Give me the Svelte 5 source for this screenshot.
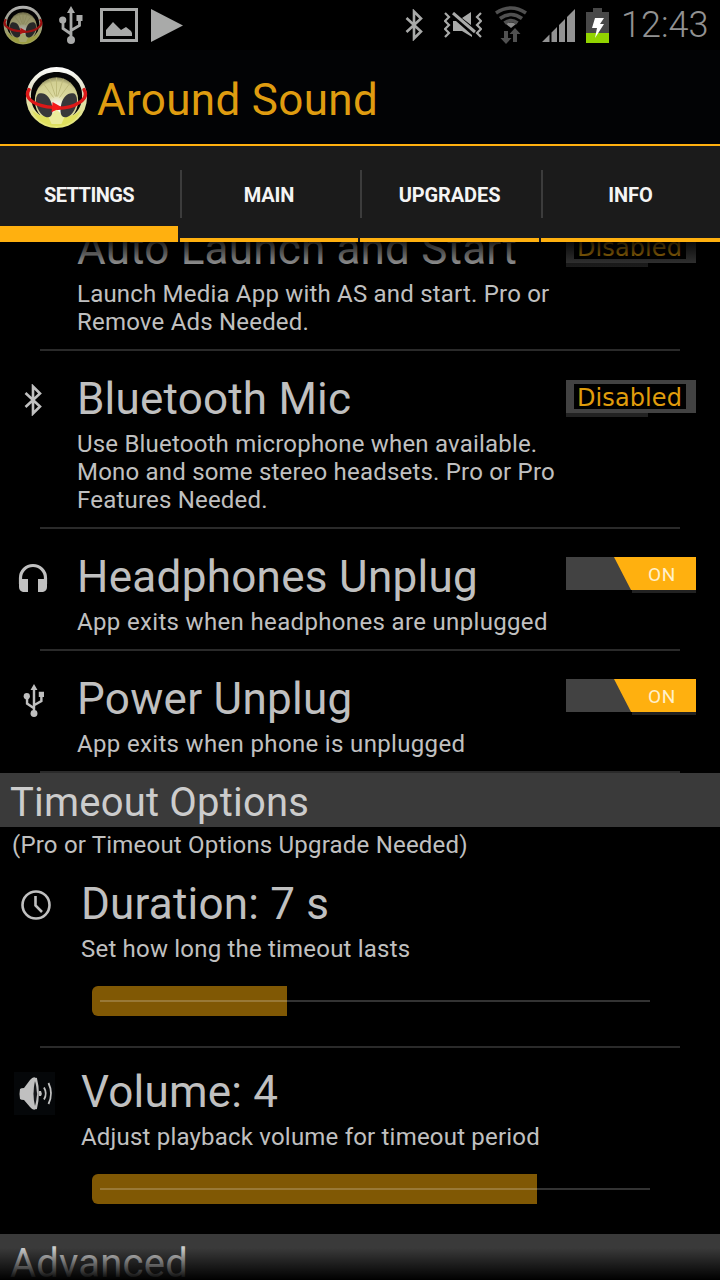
<script>
    let active = "SETTINGS";

    const tabs = ["SETTINGS", "MAIN", "UPGRADES", "INFO"];

    const options = [
        {
            title: "Auto Launch and Start",
            text: "Launch Media App with AS and start. Pro or\nRemove Ads Needed.",
            on: false,
        },
        {
            title: "Bluetooth Mic",
            icon: "bluetooth",
            text: "Use Bluetooth microphone when available.\nMono and some stereo headsets. Pro or Pro\nFeatures Needed.",
            on: false,
        },
        {
            title: "Headphones Unplug",
            icon: "headphones",
            text: "App exits when headphones are unplugged",
            on: true,
        },
        {
            title: "Power Unplug",
            icon: "usb",
            text: "App exits when phone is unplugged",
            on: true,
        },
    ];

    const sliders = [
        {
            title: "Duration: 7 s",
            icon: "clock",
            text: "Set how long the timeout lasts",
            width: 195,
        },
        {
            title: "Volume: 4",
            icon: "volume",
            text: "Adjust playback volume for timeout period",
            width: 445,
        },
    ];
</script>

<svelte:head><title>Around Sound</title></svelte:head>

{#snippet logo(size)}
    <svg class="logo" width={size} height={size} viewBox="0 0 64 64">
        <defs>
            <linearGradient id="ring{size}" x1="0" y1="0" x2="0" y2="1">
                <stop offset="0" stop-color="#ffffff" />
                <stop offset="0.4" stop-color="#dcdcc0" />
                <stop offset="1" stop-color="#e6e874" />
            </linearGradient>
            <radialGradient id="shell{size}" cx="0.5" cy="0.7" r="0.7">
                <stop offset="0" stop-color="#ffffff" />
                <stop offset="0.2" stop-color="#f4f4ea" />
                <stop offset="0.45" stop-color="#dcdaa0" />
                <stop offset="0.85" stop-color="#d2cf92" />
                <stop offset="1" stop-color="#8a875c" />
            </radialGradient>
        </defs>
        <circle cx="32" cy="32" r="31" fill="url(#ring{size})" />
        <path d="M6 30C6 15 18 6 32 6s26 9 26 24c0 10-4 16-9 20H15C10 46 6 40 6 30z" fill="#050505" />
        <ellipse cx="32" cy="35" rx="22" ry="23.500" fill="url(#shell{size})" />
        <path d="M29 32L18 17M31 31L25 13M32 31V12M33 31L39 13M35 32L46 17" stroke="#bfbb7c" stroke-width="1" fill="none" />
        <path d="M7 45c5 4 9 7 25 7s20-3 25-7c-4 10-13 16-25 16S11 55 7 45z" fill="#dfe05f" />
        <path d="M24 52l8-8 8 8-3 7H27z" fill="#ecec9c" />
        <path d="M14 28c6-2 11 3 13 10 2 8 1 15-5 14C14 51 7 33 14 28z" fill="#38383a" />
        <path d="M50 28c-6-2-11 3-13 10-2 8-1 15 5 14C50 51 57 33 50 28z" fill="#38383a" />
        <path d="M4 24C-2 34 12 41 29 42M60 24c6 10-10 19-27 19" fill="none" stroke="#dd1818" stroke-width="3.400" stroke-linecap="round" />
        <path d="M28 36.500l9.500 5.500-10.500 5z" fill="#f51a1a" />
    </svg>
{/snippet}

{#snippet usb(w, h)}
    <svg width={w} height={h} viewBox="0 0 24 38">
        <path d="M12 5v28M12 28L4 22.500V15M12 24.500l8.500-5V12" fill="none" stroke="currentColor" stroke-width="2.800" />
        <path d="M12 0l4 7H8zM17.500 9h6v6h-6z" fill="currentColor" />
        <circle cx="3.700" cy="14" r="3.600" fill="currentColor" />
        <circle cx="12" cy="34" r="4" fill="currentColor" />
    </svg>
{/snippet}

{#snippet bluetooth(w, h)}
    <svg width={w} height={h} viewBox="0 0 18 32">
        <path d="M1.500 9L16 22.500 9 29.500V2.500L16 9.500 1.500 23" fill="none" stroke="currentColor" stroke-width="2.600" />
    </svg>
{/snippet}

{#snippet icon(name)}
    {#if name === "bluetooth"}
        {@render bluetooth(18, 32)}
    {:else if name === "usb"}
        {@render usb(22, 33)}
    {:else if name === "headphones"}
        <svg width="30" height="30" viewBox="0 0 30 30">
            <path d="M2.500 21v-6a12.500 12.500 0 0 1 25 0v6" fill="none" stroke="currentColor" stroke-width="3.200" />
            <path d="M1 16h9v13H5q-4-1-4-5zM29 16h-9v13h5q4-1 4-5z" fill="currentColor" />
        </svg>
    {:else if name === "clock"}
        <svg width="32" height="32" viewBox="0 0 32 32">
            <circle cx="16" cy="16" r="13.500" fill="none" stroke="currentColor" stroke-width="2.600" />
            <path d="M15.500 7v9.500l6.500 6.500" fill="none" stroke="currentColor" stroke-width="2.600" />
        </svg>
    {:else if name === "volume"}
        <svg class="speaker" width="41" height="43" viewBox="0 0 41 43">
            <path d="M6 17q1-1 4-1l6-8q4-5 7-1v29q-3 4-7-1l-6-7q-3 0-4-1-1-5 0-10z" fill="currentColor" />
            <path d="M21 9q4 12.500 0 25-3-12.500 0-25z" fill="#15171a" />
            <path d="M22 6q4 15.500 0 31" fill="none" stroke="currentColor" stroke-width="1.800" />
            <path d="M25 19h2q1.500 2.500 0 5h-2z" fill="currentColor" />
            <path d="M30 15.500q3.500 6 0 12M34.500 11q5 10.500 0 21" fill="none" stroke="currentColor" stroke-width="1.800" />
        </svg>
    {/if}
{/snippet}

<div class="screen">
    <div class="status">
        <div class="left">
            {@render logo(40)}
            {@render usb(24, 38)}
            <svg width="38" height="34" viewBox="0 0 38 34">
                <path d="M1.500 1.500h35v31h-35z" fill="none" stroke="currentColor" stroke-width="3" />
                <path d="M6 28v-6l7-8 6 6 2 2 5-3 5 4 1 2v3z" fill="currentColor" />
            </svg>
            <svg class="play" width="32" height="33" viewBox="0 0 32 33">
                <path d="M0 0l32 16.500L0 33z" fill="currentColor" />
            </svg>
        </div>
        <div class="right">
            {@render bluetooth(18, 32)}
            <svg class="mute" width="38" height="26" viewBox="0 0 38 26">
                <path d="M1 1l4 4-4 4 4 4-4 4 4 4-4 4M37 1l-4 4 4 4-4 4 4 4-4 4 4 4" fill="none" stroke="currentColor" stroke-width="2.200" />
                <path d="M9 9v10h9l10 6v-2L12 9zM18 6l9-6v13z" fill="currentColor" />
                <path d="M9 1l22 19" stroke="currentColor" stroke-width="3" />
            </svg>
            <svg class="wifi" width="34" height="38" viewBox="0 0 34 38">
                <path d="M2 7q15-10 30 0M6 12.500q11-8 22 0M10.500 17q6.500-5 13 0" fill="none" stroke="#505050" stroke-width="3.600" />
                <path d="M12 18q5-3 10 0l-5 4z" fill="#8a8a8a" />
                <path d="M10 25h4v7h3.500L12 38l-5.500-6H10zM19 36v-8h-3.500l5.500-6 5.500 6H23v8z" fill="#505050" />
            </svg>
            <svg class="signal" width="33" height="33" viewBox="0 0 33 33">
                <path d="M0 33l7.500-7.500V33zM9.500 33V23.500l5.500-5.500v15zM17 33V16l6-6v23zM25 33V8l8-8v33z" fill="#939393" />
            </svg>
            <svg class="battery" width="23" height="35" viewBox="0 0 23 35">
                <path d="M7 0h9v4h7v31H0V4h7z" fill="#484848" />
                <path d="M0 25h23v10H0z" fill="#92d300" />
                <path d="M9 10h9l-4 6h4L9 30l2-10H6z" fill="#fff" />
            </svg>
            <span class="time">12:43</span>
        </div>
    </div>

    <header>
        {@render logo(63)}
        <h1>Around Sound</h1>
    </header>

    <nav>
        {#each tabs as tab}
            <button class:active={tab === active} on:click={() => (active = tab)}>{tab}</button>
        {/each}
    </nav>

    <main>
        <div class="list">
            {#each options as { title, text, icon: name, on }}
                <div class="row" class:on>
                    <div class="icon {name}">{@render icon(name)}</div>
                    <div class="body">
                        <h2>{title}</h2>
                        <p>{text}</p>
                    </div>
                    {#if on}
                        <div class="switch"><div class="thumb">ON</div></div>
                    {:else}
                        <div class="disabled"><span>Disabled</span></div>
                    {/if}
                </div>
                <hr />
            {/each}

            <h3>Timeout Options</h3>
            <p class="note">(Pro or Timeout Options Upgrade Needed)</p>

            {#each sliders as { title, text, icon: name, width }, i}
                {#if i > 0}<hr />{/if}
                <div class="row slide">
                    <div class="icon {name}">{@render icon(name)}</div>
                    <div class="body">
                        <h2>{title}</h2>
                        <p>{text}</p>
                        <div class="slider">
                            <div class="fill" style="width: {width}px"></div>
                            <div class="track"></div>
                        </div>
                    </div>
                </div>
            {/each}

            <h3>Advanced</h3>
        </div>
    </main>
</div>

<style>
    :global(body) {
        background: #000;
    }
    .screen {
        display: flex;
        flex-direction: column;
        width: 720px;
        height: 1280px;
        overflow: hidden;
        background: #000;
        color: #c0c0c0;
        font-family: Roboto, sans-serif;
    }
    svg {
        display: block;
        flex: none;
    }
    h1, h2, h3, p {
        margin: 0;
        font-weight: 400;
        white-space: pre;
    }

    .status {
        display: flex;
        justify-content: space-between;
        height: 50px;
        color: #a9aaa9;
    }
    .left, .right {
        display: flex;
        align-items: center;
    }
    .left {
        padding-left: 3px;
        gap: 17px;
    }
    .left .logo {
        opacity: 0.7;
        margin-right: -1px;
    }
    .play {
        margin-left: -4px;
    }
    .right {
        padding-right: 11px;
    }
    .mute {
        margin-left: 21px;
    }
    .wifi {
        margin-left: 12px;
    }
    .signal {
        margin-left: 14px;
    }
    .battery {
        margin-left: 11px;
    }
    .time {
        width: 88px;
        margin-left: 12px;
        color: #929292;
        font-size: 36px;
        font-weight: 300;
        line-height: 50px;
        white-space: nowrap;
    }

    header {
        display: flex;
        align-items: center;
        height: 94px;
        padding-left: 25px;
        gap: 9px;
        background: #020305;
        border-bottom: 2px solid #ffb00f;
    }
    h1 {
        color: #df9c10;
        font-size: 44px;
        letter-spacing: 0.33px;
        line-height: 52px;
        padding-top: 5px;
    }

    nav {
        display: grid;
        grid-template-columns: 178px 178px 179px 179px;
        column-gap: 2px;
        height: 96px;
        background: #1b1b1b;
    }
    nav button {
        position: relative;
        padding: 6px 0 0;
        border: 0;
        border-bottom: 4px solid #ffb00f;
        background: none;
        color: #f4f4f4;
        font: 700 20px Roboto, sans-serif;
        letter-spacing: -0.1px;
    }
    nav button.active {
        border-bottom-width: 16px;
        padding-top: 18px;
        letter-spacing: -0.55px;
    }
    nav button + button::before {
        content: "";
        position: absolute;
        left: 0;
        top: 24px;
        width: 2px;
        height: 48px;
        background: #3c3c3c;
    }

    main {
        position: relative;
        flex: 1;
        min-height: 0;
        overflow: hidden;
    }
    /* fading edges of the scroll area */
    main::before, main::after {
        content: "";
        position: absolute;
        z-index: 1;
        left: 0;
        right: 0;
        height: 32px;
    }
    main::before {
        top: 0;
        background: linear-gradient(rgba(0, 0, 0, 0.85), transparent);
    }
    main::after {
        bottom: 0;
        background: linear-gradient(transparent, #000);
    }
    .list {
        margin-top: -41px;
    }
    .row {
        display: grid;
        grid-template-columns: 77px 489px 130px;
        padding: 22px 0 13px;
    }
    .icon {
        display: flex;
        align-items: center;
        height: 54px;
        padding-left: 18px;
    }
    .icon.bluetooth {
        padding-left: 24px;
    }
    .icon.usb {
        padding-left: 23px;
    }
    h2 {
        font-size: 44px;
        letter-spacing: 0.2px;
        line-height: 52px;
    }
    p {
        font-size: 24px;
        letter-spacing: 0.2px;
        line-height: 28px;
    }
    .body p {
        margin-top: 5px;
    }
    .on h2 {
        letter-spacing: 0.3px;
    }
    .on p {
        letter-spacing: 0.34px;
    }
    hr {
        height: 2px;
        margin: 0 40px;
        border: 0;
        background: #2a2a2a;
    }

    .disabled {
        position: relative;
        box-sizing: border-box;
        height: 33px;
        margin-top: 7px;
        padding: 4px 10px 4px 8px;
        background: #424242;
    }
    .disabled::after {
        content: "";
        position: absolute;
        left: 0;
        top: 33px;
        width: 82px;
        height: 4px;
        background: #222;
    }
    .disabled span {
        display: block;
        height: 25px;
        padding-left: 3px;
        background: #000;
        color: #e09d0c;
        font: 24px/29px "DejaVu Sans", sans-serif;
        letter-spacing: 0.1px;
    }
    .switch {
        position: relative;
        height: 33px;
        margin-top: 6px;
        background: #424242;
    }
    .switch::after {
        content: "";
        position: absolute;
        right: 0;
        top: 33px;
        width: 64px;
        height: 3px;
        background: #222;
    }
    .thumb {
        height: 33px;
        padding-left: 82px;
        background: #ffb00f;
        clip-path: polygon(48px 0, 130px 0, 130px 33px, 65px 33px);
        color: #fff0cc;
        font-size: 19px;
        letter-spacing: 0.7px;
        line-height: 36px;
    }

    h3 {
        height: 54px;
        padding-left: 10px;
        background: #3a3a3a;
        color: #ccc;
        font-size: 40px;
        letter-spacing: 0.2px;
        line-height: 59px;
    }
    .note {
        height: 29px;
        padding: 4px 0 0 12px;
    }
    .slide {
        grid-template-columns: 81px 1fr;
        padding: 18px 0 30px;
    }
    .icon.clock {
        padding-left: 20px;
    }
    .icon.volume {
        padding-left: 14px;
    }
    .speaker {
        background: #050709;
    }
    .slider {
        display: grid;
        align-items: center;
        height: 30px;
        margin: 23px 70px 0 11px;
    }
    .fill, .track {
        grid-area: 1 / 1;
    }
    .fill {
        height: 30px;
        border-radius: 6px 0 0 6px;
        background: #805804;
    }
    .track {
        height: 2px;
        margin-left: 8px;
        background: rgba(255, 255, 255, 0.2);
    }
</style>
